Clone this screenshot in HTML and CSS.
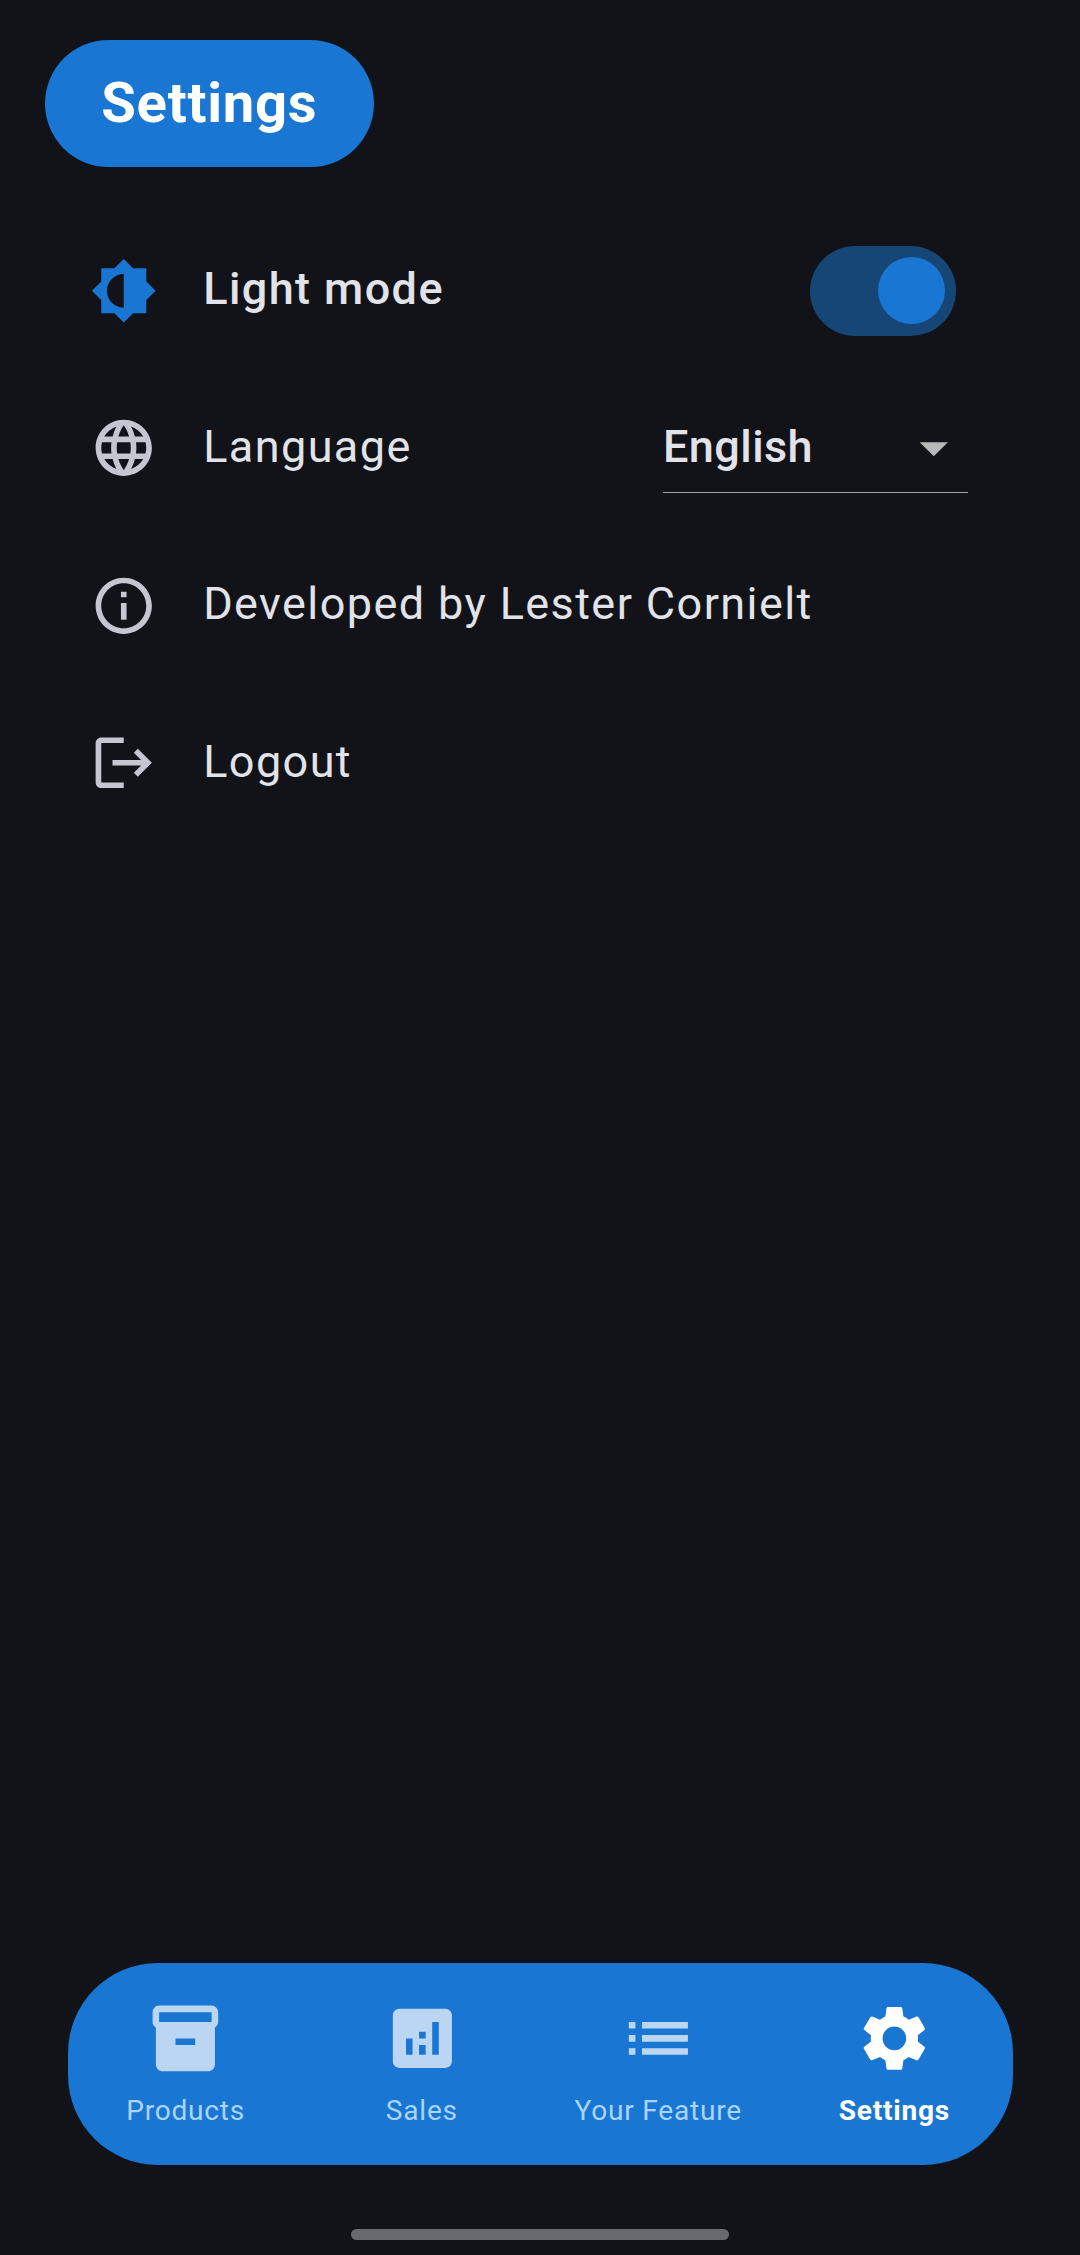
FILE: index.html
```html
<!DOCTYPE html>
<html lang="en">
<head>
<meta charset="utf-8">
<title>Settings</title>
<link rel="stylesheet" href="styles.css">
</head>
<body>
<div class="screen">
  <header class="header"><h1 class="title">Settings</h1></header>
  <main class="list">
    <div class="row">
      <svg class="icon icon-accent" viewBox="0 0 24 24"><path d="M20 15.31L23.31 12 20 8.69V4h-4.69L12 .69 8.69 4H4v4.69L.69 12 4 15.31V20h4.69L12 23.31 15.31 20H20v-4.69zM12 18c-3.31 0-6-2.69-6-6s2.69-6 6-6v12z"/></svg>
      <span class="label label-strong">Light mode</span>
      <span class="switch" role="switch" aria-checked="true"><span class="thumb"></span></span>
    </div>
    <div class="row row-select">
      <svg class="icon" viewBox="0 0 24 24"><path d="M11.99 2C6.47 2 2 6.48 2 12s4.47 10 9.99 10C17.52 22 22 17.52 22 12S17.52 2 11.99 2zm6.93 6h-2.95c-.32-1.25-.78-2.45-1.38-3.56 1.84.63 3.37 1.91 4.33 3.56zM12 4.04c.83 1.2 1.48 2.53 1.91 3.96h-3.82c.43-1.43 1.08-2.76 1.91-3.96zM4.26 14C4.1 13.36 4 12.69 4 12s.1-1.36.26-2h3.38c-.08.66-.14 1.32-.14 2s.06 1.34.14 2H4.26zm.82 2h2.95c.32 1.25.78 2.45 1.38 3.56-1.84-.63-3.37-1.9-4.33-3.56zm2.95-8H5.08c.96-1.66 2.49-2.93 4.33-3.56C8.81 5.55 8.35 6.75 8.03 8zM12 19.96c-.83-1.2-1.48-2.53-1.91-3.96h3.82c-.43 1.43-1.08 2.76-1.91 3.96zM14.34 14H9.66c-.09-.66-.16-1.32-.16-2s.07-1.35.16-2h4.68c.09.65.16 1.32.16 2s-.07 1.34-.16 2zm.25 5.56c.6-1.11 1.06-2.31 1.38-3.56h2.95c-.96 1.65-2.49 2.93-4.33 3.56zM16.36 14c.08-.66.14-1.32.14-2s-.06-1.34-.14-2h3.38c.16.64.26 1.31.26 2s-.1 1.36-.26 2h-3.38z"/></svg>
      <span class="label">Language</span>
      <span class="select"><span class="value">English</span>
        <svg class="icon caret" viewBox="0 0 24 24"><path d="M7 10l5 5 5-5z"/></svg></span>
    </div>
    <div class="row">
      <svg class="icon" viewBox="0 0 24 24"><path d="M11 7h2v2h-2zm0 4h2v6h-2zm1-9C6.48 2 2 6.48 2 12s4.48 10 10 10 10-4.48 10-10S17.52 2 12 2zm0 18c-4.41 0-8-3.59-8-8s3.59-8 8-8 8 3.59 8 8-3.59 8-8 8z"/></svg>
      <span class="label">Developed by Lester Cornielt</span>
    </div>
    <div class="row">
      <svg class="icon" viewBox="0 0 24 24"><path d="M17 7l-1.41 1.41L18.17 11H8v2h10.17l-2.58 2.58L17 17l5-5zM4 5h8V3H4c-1.1 0-2 .9-2 2v14c0 1.1.9 2 2 2h8v-2H4V5z"/></svg>
      <span class="label">Logout</span>
    </div>
  </main>
  <nav class="nav">
    <a class="tab">
      <svg class="tab-icon" viewBox="0 0 24 24"><path d="M20 2H4c-1 0-2 .9-2 2v3.01c0 .72.43 1.34 1 1.69V20c0 1.1 1.1 2 2 2h14c.9 0 2-.9 2-2V8.7c.57-.35 1-.97 1-1.69V4c0-1.1-1-2-2-2zm-5 12H9v-2h6v2zm5-7H4V4h16v3z"/></svg>
      <span class="tab-label">Products</span>
    </a>
    <a class="tab">
      <svg class="tab-icon" viewBox="0 0 24 24"><path d="M19 3H5c-1.1 0-2 .9-2 2v14c0 1.1.9 2 2 2h14c1.1 0 2-.9 2-2V5c0-1.1-.9-2-2-2zM9 17H7v-5h2v5zm4 0h-2v-3h2v3zm0-5h-2v-2h2v2zm4 5h-2V7h2v10z"/></svg>
      <span class="tab-label">Sales</span>
    </a>
    <a class="tab">
      <svg class="tab-icon" viewBox="0 0 24 24"><path d="M3 13h2v-2H3v2zm0 4h2v-2H3v2zm0-8h2V7H3v2zm4 4h14v-2H7v2zm0 4h14v-2H7v2zM7 7v2h14V7H7z"/></svg>
      <span class="tab-label">Your Feature</span>
    </a>
    <a class="tab tab-active">
      <svg class="tab-icon" viewBox="0 0 24 24"><path d="M19.14 12.94c.04-.3.06-.61.06-.94 0-.32-.02-.64-.07-.94l2.03-1.58c.18-.14.23-.41.12-.61l-1.92-3.32c-.12-.22-.37-.29-.59-.22l-2.39.96c-.5-.38-1.03-.7-1.62-.94l-.36-2.54c-.04-.24-.24-.41-.48-.41h-3.84c-.24 0-.43.17-.47.41l-.36 2.54c-.59.24-1.13.57-1.62.94l-2.39-.96c-.22-.08-.47 0-.59.22L2.74 8.87c-.12.21-.08.47.12.61l2.03 1.58c-.05.3-.09.63-.09.94s.02.64.07.94l-2.03 1.58c-.18.14-.23.41-.12.61l1.92 3.32c.12.22.37.29.59.22l2.39-.96c.5.38 1.03.7 1.62.94l.36 2.54c.05.24.24.41.48.41h3.84c.24 0 .44-.17.47-.41l.36-2.54c.59-.24 1.13-.56 1.62-.94l2.39.96c.22.08.47 0 .59-.22l1.92-3.32c.12-.22.07-.47-.12-.61l-2.01-1.58zM12 15.6c-1.98 0-3.6-1.62-3.6-3.6s1.62-3.6 3.6-3.6 3.6 1.62 3.6 3.6-1.62 3.6-3.6 3.6z"/></svg>
      <span class="tab-label">Settings</span>
    </a>
  </nav>
  <div class="home-bar"></div>
</div>
</body>
</html>
```
FILE: styles.css
```css
* { box-sizing: border-box; }
body { margin: 0; background: #111318; color: #e2e2e9; font-family: Roboto, sans-serif; }
.screen { width: 1080px; height: 2255px; padding-top: 40px; display: flex; flex-direction: column; overflow: hidden; }
.header { padding: 0 45px; display: flex; }
.title {
  margin: 0; height: 126.5px; padding: 0 56.25px; border-radius: 64px;
  background: #1976d2; color: #fff; font-size: 56.25px; font-weight: 700; line-height: 126px;
  letter-spacing: 0.703px;
}
.list { margin-top: 45.25px; padding: 0 112.5px 0 90px; flex: 1; }
.row { height: 157.5px; display: flex; align-items: center; gap: 45px; }
.icon { width: 67.5px; height: 67.5px; flex: none; fill: #c4c6d0; display: block; }
.icon-accent { fill: #1976d2; }
.label { flex: 1; font-size: 45px; line-height: 67.5px; letter-spacing: 1.406px; white-space: nowrap; padding: 0 0 3px 0.7px; }
.label-strong { font-weight: 500; }
.switch {
  width: 146.25px; height: 90px; margin-right: 11.25px; padding: 11.25px; border-radius: 45px;
  background: #164675; display: flex; justify-content: flex-end;
}
.thumb { width: 67.5px; height: 67.5px; border-radius: 50%; background: #1976d2; }
.select { width: 304.5px; height: 90px; display: flex; align-items: center; justify-content: space-between; border-bottom: 1.4px solid #a0a1a6; }
.value { font-size: 45px; font-weight: 500; line-height: 67.5px; letter-spacing: 0.42px; padding-bottom: 2px; }
.caret { fill: #b8b8ba; }
.nav {
  height: 202.5px; margin: 0 67.5px; padding-top: 36.5px; border-radius: 90px;
  background: #1976d2; display: flex;
}
.tab { flex: 1; display: flex; flex-direction: column; align-items: center; color: #a9d4fb; }
.tab-icon { width: 78.75px; height: 78.75px; fill: #bad6f2; }
.tab-label { margin-top: 13.5px; font-size: 28.125px; line-height: 40px; letter-spacing: 0.76px; white-space: nowrap; }
.tab-active { color: #fff; font-weight: 700; }
.tab-active .tab-icon { fill: #fff; }
.home-bar { width: 378px; height: 11px; margin: 64px auto 15px; border-radius: 6px; background: #68696d; }
```
